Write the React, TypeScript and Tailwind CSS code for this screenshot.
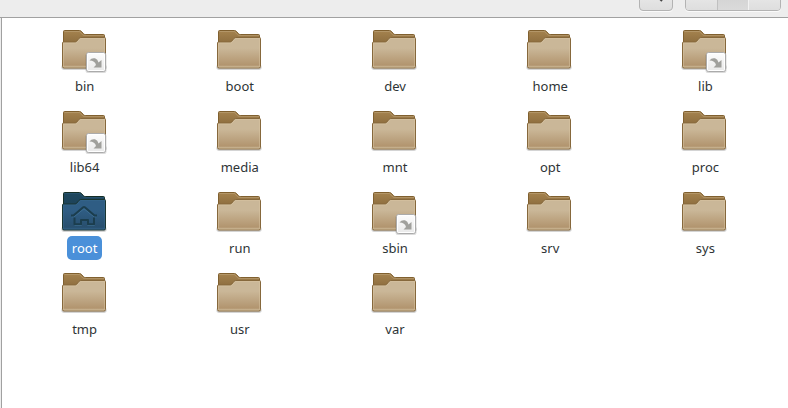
import React, { useState } from 'react';
import clsx from 'clsx';
import { LayoutGrid, List, ChevronDown } from 'lucide-react';

interface Entry {
  name: string;
  link?: boolean;
  home?: boolean;
}

const entries: Entry[] = [
  { name: 'bin', link: true },
  { name: 'boot' },
  { name: 'dev' },
  { name: 'home' },
  { name: 'lib', link: true },
  { name: 'lib64', link: true },
  { name: 'media' },
  { name: 'mnt' },
  { name: 'opt' },
  { name: 'proc' },
  { name: 'root', home: true },
  { name: 'run' },
  { name: 'sbin', link: true },
  { name: 'srv' },
  { name: 'sys' },
  { name: 'tmp' },
  { name: 'usr' },
  { name: 'var' },
];

const tan = {
  backTop: '#a5834f',
  backBottom: '#8e6e3f',
  backEdge: '#80602f',
  frontTop: '#cab798',
  frontBottom: '#b2956f',
  frontEdge: '#86683c',
  shine: '#dcc8a4',
};

const blue = {
  backTop: '#1f485f',
  backBottom: '#1c4259',
  backEdge: '#152e26',
  frontTop: '#2f5d84',
  frontBottom: '#284f6e',
  frontEdge: '#1a3531',
  shine: '#3a6a90',
};

const FolderIcon: React.FC<Entry & { active: boolean }> = ({ name, link, home, active }) => {
  const c = active ? blue : tan;
  return (
    <svg viewBox="1 0 48 48" className="size-12" aria-hidden="true">
      <defs>
        <linearGradient id={`back-${name}`} x1="0" y1="0" x2="0" y2="1">
          <stop offset="0" stopColor={c.backTop} />
          <stop offset="0.35" stopColor={c.backBottom} />
        </linearGradient>
        <linearGradient id={`front-${name}`} x1="0" y1="0" x2="0" y2="1">
          <stop offset="0" stopColor={c.frontTop} />
          <stop offset="0.35" stopColor={c.frontTop} />
          <stop offset="0.9" stopColor={c.frontBottom} />
          <stop offset="1" stopColor={c.frontTop} />
        </linearGradient>
        <linearGradient id={`emblem-${name}`} x1="0" y1="0" x2="0" y2="1">
          <stop offset="0" stopColor="#fdfdfd" />
          <stop offset="1" stopColor="#e9e9e9" />
        </linearGradient>
      </defs>
      <rect x="1" y="39" width="46" height="4.500" rx="2" fill="#000" opacity="0.1" />
      <rect x="2" y="40" width="44" height="4" rx="2" fill="#000" opacity="0.12" />
      <path
        d="M3.500 40V5.500q0-1 1-1H19.500q1 0 1.700.7L23.500 7.700q.7.800 1.700.8H43.500q1 0 1 1V40z"
        fill={`url(#back-${name})`}
        stroke={c.backEdge}
      />
      <path d="M4.500 5.500H19.400L22.600 8.700Q23.300 9.500 24.300 9.500H44" fill="none" stroke={c.shine} opacity="0.3" />
      <path
        d="M2.500 17q0-1 1-1H15q1 0 1.700-.8L19 12.400q.8-.9 1.800-.9H44.500q1 0 1 1V40.500q0 1.500-1.500 1.500H4q-1.500 0-1.500-1.500z"
        fill={`url(#front-${name})`}
        stroke={c.frontEdge}
      />
      <path
        d="M3.500 40V17H15.500q1 0 1.700-.8L19.500 13.400q.8-.9 1.800-.9H44.500V40q0 1-1 1H4.500q-1 0-1-1z"
        fill="none"
        stroke={c.shine}
        opacity="0.45"
      />
      {home && (
        <g fill="none" strokeLinejoin="round">
          <path
            d="M11.500 28.800H14L24 20.700L34 28.800H36.500M14.500 37.500H21.500M27.500 37.500H34.500"
            stroke={active ? '#3f7096' : '#dccaa9'}
          />
          <path
            d="M11 27.500H13.500L23.200 19.200Q24 18.600 24.800 19.200L34.500 27.500H37M14.500 29.500V36.200H21V32H28V36.200H34V29.500"
            stroke={active ? '#1b3d4d' : '#8a6b3f'}
            strokeWidth="2"
          />
        </g>
      )}
      {link && (
        <g>
          <rect x="25.500" y="27" width="21" height="20" rx="2.500" fill="#000" opacity="0.14" />
          <rect x="26.500" y="26.500" width="19" height="19" rx="2" fill={`url(#emblem-${name})`} stroke="#ababab" />
          <rect x="27.500" y="27.500" width="17" height="17" rx="1" fill="none" stroke="#fff" />
          <path
            d="M29.500 34.500Q31.500 31.500 35 32.300Q37.800 33.300 38.500 36.500L41.500 34V41.500H33.500L36 39Q35 34.500 29.500 34.500z"
            fill="#a0a09c"
          />
        </g>
      )}
    </svg>
  );
};

const Toolbar: React.FC = () => (
  <header className="flex h-[18px] shrink-0 items-end justify-end gap-3 overflow-hidden border-b border-[#a1a1a1] bg-[#ededed] pr-[7px] pb-1.5">
    <button
      aria-label="Search"
      className="flex h-8 w-[34px] shrink-0 items-center justify-center rounded border border-[#b3b3b3] bg-linear-to-b from-[#f2f2f2] to-[#dedede] shadow-[0_1px_0_#fafafa]"
    >
      <svg viewBox="0 0 14 14" className="size-3.5" fill="none" stroke="#444" strokeWidth="2" aria-hidden="true">
        <circle cx="5.500" cy="5.500" r="4.500" />
        <path d="M9 9L13 13" />
      </svg>
    </button>
    <div className="flex h-8 w-24 shrink-0 overflow-hidden rounded border border-[#b3b3b3] shadow-[0_1px_0_#fafafa]">
      <button aria-label="List view" className="flex flex-1 justify-center bg-linear-to-b from-[#f2f2f2] to-[#dedede]">
        <List className="size-4 text-[#444]" />
      </button>
      <button
        aria-label="Icon view"
        aria-pressed="true"
        className="flex flex-1 justify-center border-x border-l-[#c0c0c0] border-r-[#f2f2f2] bg-linear-to-b from-[#cccccc] to-[#dadada]"
      >
        <LayoutGrid className="size-4 text-[#444]" />
      </button>
      <button aria-label="View options" className="flex flex-1 justify-center bg-linear-to-b from-[#f2f2f2] to-[#dedede]">
        <ChevronDown className="size-4 text-[#444]" />
      </button>
    </div>
  </header>
);

const App: React.FC = () => {
  const [selected, setSelected] = useState('root');

  return (
    <div className="flex min-h-screen flex-col bg-[#ededed] font-['Noto_Sans','Open_Sans',sans-serif] text-[13px] text-[#2e3436]">
      <Toolbar />
      <main className="ml-px flex-1 border-l border-[#a1a1a1] bg-white">
        <div className="grid grid-cols-5 gap-y-[9px] px-[5px] pt-2">
          {entries.map((entry) => {
            const active = entry.name === selected;
            return (
              <button
                key={entry.name}
                aria-pressed={active}
                onClick={() => setSelected(entry.name)}
                className="flex flex-col items-center"
              >
                <FolderIcon {...entry} active={active} />
                <span className={clsx('rounded-[5px] px-[5px] leading-6', active && 'bg-[#4a90d9] text-white')}>
                  {entry.name}
                </span>
              </button>
            );
          })}
        </div>
      </main>
    </div>
  );
};

export default App;
